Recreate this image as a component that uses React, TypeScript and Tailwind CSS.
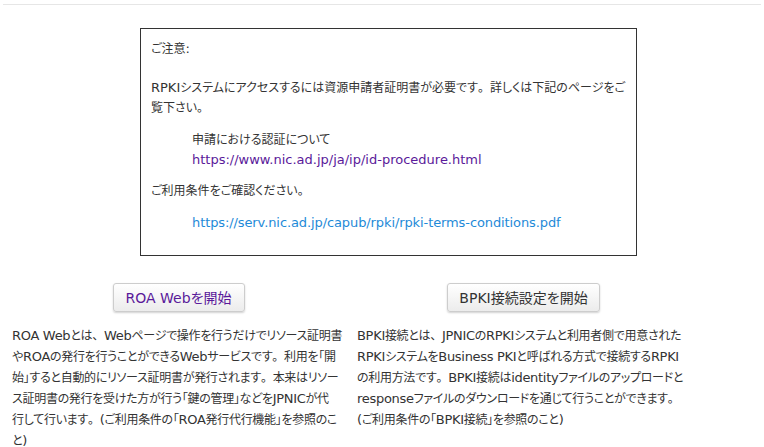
import React from "react";

const font = "[font-family:'DejaVu_Sans','Noto_Sans_CJK_JP',sans-serif] [font-feature-settings:'palt']";

function J({ t }: { t: string }) {
  const parts = t.split(/([A-Za-z0-9 .:\/()\-]+|[、。])/);
  return (
    <>
      {parts.map((s, i) => {
        if (!s) return null;
        if (s === "、" || s === "。")
          return (
            <span key={i} className="[font-feature-settings:normal]">
              {s}
            </span>
          );
        if (/^[A-Za-z0-9 .:\/()\-]+$/.test(s))
          return (
            <span key={i} className="text-[13px] leading-[0]">
              {s}
            </span>
          );
        return <React.Fragment key={i}>{s}</React.Fragment>;
      })}
    </>
  );
}

function Btn({ children, w, color }: { children: React.ReactNode; w: string; color: string }) {
  return (
    <button
      className={`${w} h-[29px] rounded-[3px] border border-[#cdcdcd] bg-gradient-to-b from-white to-[#ececec] shadow-[0_1px_2px_rgba(0,0,0,0.18)] text-[14px] leading-none ${color} ${font}`}
    >
      {children}
    </button>
  );
}

export default function App() {
  return (
    <div className={`w-[764px] h-[447px] overflow-hidden bg-white text-[#333] text-[12px] leading-[20px] ${font}`}>
      <div className="mx-[3px] pt-[4px]">
        <div className="border-t border-[#e6e6e6]" />
      </div>
      <div className="ml-[140px] mt-[23px] w-[497px] border border-[#333] px-[10px] pt-[10px] pb-[22px] whitespace-nowrap">
        <p className="mb-[19px]">
          <J t="ご注意:" />
        </p>
        <p>
          <J t="RPKIシステムにアクセスするには資源申請者証明書が必要です。詳しくは下記のページをご" />
          <br />
          <J t="覧下さい。" />
        </p>
        <div className="mt-[12px] pl-[41px]">
          <p>申請における認証について</p>
          <p>
            <a className="text-[#5a1a9a] text-[13px] leading-[0]">https://www.nic.ad.jp/ja/ip/id-procedure.html</a>
          </p>
        </div>
        <p className="mt-[11px]">
          <J t="ご利用条件をご確認ください。" />
        </p>
        <p className="mt-[12px] pl-[41px]">
          <a className="text-[#1e8ad8] text-[13px] leading-[0] tracking-[-0.1px]">https://serv.nic.ad.jp/capub/rpki/rpki-terms-conditions.pdf</a>
        </p>
      </div>
      <div className="flex ml-[6px] mt-[27px]">
        <div className="w-[345px] px-[6px] flex flex-col items-center">
          <Btn w="w-[132px]" color="text-[#5a1a9a]">ROA Webを開始</Btn>
          <p className="mt-[14px] self-stretch leading-[21px] tracking-[-0.3px] whitespace-nowrap">
            <J t="ROA Webとは、Webページで操作を行うだけでリソース証明書" />
            <br />
            <J t="やROAの発行を行うことができるWebサービスです。利用を「開" />
            <br />
            <J t="始」すると自動的にリソース証明書が発行されます。本来はリソー" />
            <br />
            <J t="ス証明書の発行を受けた方が行う「鍵の管理」などをJPNICが代" />
            <br />
            <J t="行して行います。(ご利用条件の「ROA発行代行機能」を参照のこ" />
            <br />
            <J t="と)" />
          </p>
        </div>
        <div className="w-[345px] px-[6px] flex flex-col items-center">
          <Btn w="w-[153px]" color="text-[#333]">BPKI接続設定を開始</Btn>
          <p className="mt-[14px] self-stretch leading-[21px] tracking-[-0.3px] whitespace-nowrap">
            <J t="BPKI接続とは、JPNICのRPKIシステムと利用者側で用意された" />
            <br />
            <J t="RPKIシステムをBusiness PKIと呼ばれる方式で接続するRPKI" />
            <br />
            <J t="の利用方法です。BPKI接続はidentityファイルのアップロードと" />
            <br />
            <J t="responseファイルのダウンロードを通じて行うことができます。" />
            <br />
            <J t="(ご利用条件の「BPKI接続」を参照のこと)" />
          </p>
        </div>
      </div>
    </div>
  );
}
